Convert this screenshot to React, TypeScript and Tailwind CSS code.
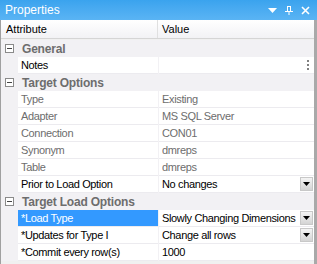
const FONT = "font-['Tahoma','Liberation_Sans',sans-serif]";

type Row =
  | { kind: 'cat'; label: string }
  | { kind: 'prop'; name: string; value: string; dim?: boolean; drop?: boolean; selected?: boolean; dots?: boolean };

const ROWS: Row[] = [
  { kind: 'cat', label: 'General' },
  { kind: 'prop', name: 'Notes', value: '', dots: true },
  { kind: 'cat', label: 'Target Options' },
  { kind: 'prop', name: 'Type', value: 'Existing', dim: true },
  { kind: 'prop', name: 'Adapter', value: 'MS SQL Server', dim: true },
  { kind: 'prop', name: 'Connection', value: 'CON01', dim: true },
  { kind: 'prop', name: 'Synonym', value: 'dmreps', dim: true },
  { kind: 'prop', name: 'Table', value: 'dmreps', dim: true },
  { kind: 'prop', name: 'Prior to Load Option', value: 'No changes', drop: true },
  { kind: 'cat', label: 'Target Load Options' },
  { kind: 'prop', name: '*Load Type', value: 'Slowly Changing Dimensions', drop: true, selected: true },
  { kind: 'prop', name: '*Updates for Type I', value: 'Change all rows', drop: true },
  { kind: 'prop', name: '*Commit every row(s)', value: '1000' },
];

function DropButton() {
  return (
    <div className="shrink-0 ml-[3px] w-[13px] h-[14px] flex items-center justify-center bg-gradient-to-b from-[#f4f4f4] to-[#d4d4d4] border border-[#c8c8c8]">
      <svg width="7" height="4" viewBox="0 0 7 4">
        <path d="M0 0h7L3.5 4z" fill="#000" />
      </svg>
    </div>
  );
}

function Minus() {
  return (
    <div className="w-[9px] h-[9px] border border-[#8a8a8a] bg-white flex items-center justify-center">
      <div className="w-[5px] h-px bg-[#444]" />
    </div>
  );
}

export default function App() {
  return (
    <div className={`w-[317px] h-[264px] bg-[#f0f0f0] flex flex-col text-[11px] tracking-[-0.35px] ${FONT}`}>
      {/* title bar */}
      <div className="h-[20px] flex items-center justify-between pl-[5px] pr-[7px] bg-gradient-to-b from-[#3aa3ee] to-[#5ab4f4] text-white">
        <span className="text-[12px] tracking-normal">Properties</span>
        <div className="flex items-center gap-[8px]">
          <svg width="9" height="5" viewBox="0 0 9 5"><path d="M0 0h9L4.5 5z" fill="#fff" /></svg>
          <svg width="8" height="9" viewBox="0 0 8 9" fill="#fff">
            <rect x="2" y="0" width="1" height="5" />
            <rect x="5" y="0" width="1" height="5" />
            <rect x="2" y="0" width="4" height="1" />
            <rect x="0" y="5" width="8" height="1" />
            <rect x="3.5" y="6" width="1" height="3" />
          </svg>
          <svg width="9" height="9" viewBox="0 0 9 9" stroke="#fff" strokeWidth="1.6">
            <path d="M1 1l7 7M8 1l-7 7" />
          </svg>
        </div>
      </div>

      <div className="flex-1 flex border-x border-[#a0a0a0] border-r-[3px] border-r-[#a9a9a9]">
        <div className="flex-1 flex flex-col">
          {/* header */}
          <div className="h-[19px] flex bg-gradient-to-b from-[#ffffff] to-[#f2f2f5] border-b border-[#d5d5d5] text-black">
            <div className="w-[157px] pl-[5px] flex items-center border-r border-[#e0e0e0] tracking-normal">Attribute</div>
            <div className="flex-1 pl-[4px] flex items-center tracking-normal">Value</div>
          </div>
          <div className="h-px" />
          {ROWS.map((r, i) =>
            r.kind === 'cat' ? (
              <div key={i} className="h-[17px] flex items-center bg-[#f2f1f4]">
                <div className="w-[17px] flex justify-center">
                  <Minus />
                </div>
                <span className="pl-[4px] font-bold text-[#6d6d6d] text-[12px] tracking-[-0.2px]">{r.label}</span>
              </div>
            ) : (
              <div key={i} className="h-[17px] flex bg-[#f2f1f4]">
                <div className="w-[17px]" />
                <div
                  className={`w-[140px] flex items-center pl-[3px] border-b border-[#ecebef] whitespace-nowrap overflow-hidden ${
                    r.selected ? 'bg-[#3399ff] text-white' : r.dim ? 'bg-white text-[#6d6d6d]' : 'bg-white text-black'
                  }`}
                >
                  {r.name}
                </div>
                <div className="w-px" />
                <div
                  className={`flex-1 min-w-0 flex items-center pl-[3px] pr-[1px] border-b border-[#ecebef] bg-white ${
                    r.dim ? 'text-[#6d6d6d]' : 'text-black'
                  }`}
                >
                  <span className="flex-1 min-w-0 whitespace-nowrap overflow-hidden">{r.value}</span>
                  {r.drop && <DropButton />}
                  {r.dots && (
                    <div className="flex flex-col gap-[2px] pr-[4px]">
                      <div className="w-[2px] h-[2px] bg-[#808080]" />
                      <div className="w-[2px] h-[2px] bg-[#808080]" />
                      <div className="w-[2px] h-[2px] bg-[#808080]" />
                    </div>
                  )}
                </div>
              </div>
            )
          )}
        </div>
      </div>
    </div>
  );
}
